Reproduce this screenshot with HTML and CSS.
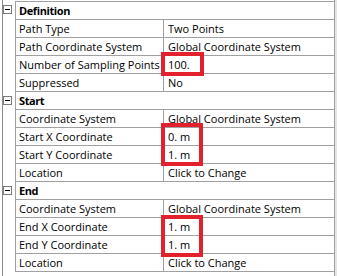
FILE: index.html
```
<!DOCTYPE html>
<html lang="en">
<head>
    <meta charset="UTF-8">
    <title>Path Details</title>
    <link rel="stylesheet" href="styles.css">
</head>
<body>
    <div class="panel">
        <!-- Definition -->
        <div class="row group first">
            <div class="gutter"><span class="toggle"></span></div>
            <div class="cell head">Definition</div>
        </div>
        <div class="row"><div class="gutter"></div><div class="cell name">Path Type</div><div class="cell value">Two Points</div></div>
        <div class="row"><div class="gutter"></div><div class="cell name">Path Coordinate System</div><div class="cell value">Global Coordinate System</div></div>
        <div class="row"><div class="gutter"></div><div class="cell name">Number of Sampling Points</div><div class="cell value">100.</div></div>
        <div class="row"><div class="gutter"></div><div class="cell name">Suppressed</div><div class="cell value">No</div></div>

        <!-- Start -->
        <div class="row group">
            <div class="gutter"><span class="toggle"></span></div>
            <div class="cell head">Start</div>
        </div>
        <div class="row"><div class="gutter"></div><div class="cell name">Coordinate System</div><div class="cell value">Global Coordinate System</div></div>
        <div class="row"><div class="gutter"></div><div class="cell name">Start X Coordinate</div><div class="cell value">0. m</div></div>
        <div class="row"><div class="gutter"></div><div class="cell name">Start Y Coordinate</div><div class="cell value">1. m</div></div>
        <div class="row"><div class="gutter"></div><div class="cell name">Location</div><div class="cell value">Click to Change</div></div>

        <!-- End -->
        <div class="row group">
            <div class="gutter"><span class="toggle"></span></div>
            <div class="cell head">End</div>
        </div>
        <div class="row"><div class="gutter"></div><div class="cell name">Coordinate System</div><div class="cell value">Global Coordinate System</div></div>
        <div class="row"><div class="gutter"></div><div class="cell name">End X Coordinate</div><div class="cell value">1. m</div></div>
        <div class="row"><div class="gutter"></div><div class="cell name">End Y Coordinate</div><div class="cell value">1. m</div></div>
        <div class="row"><div class="gutter"></div><div class="cell name">Location</div><div class="cell value">Click to Change</div></div>

        <!-- highlight boxes drawn over the grid -->
        <div class="mark mark-points"></div>
        <div class="mark mark-start"></div>
        <div class="mark mark-end"></div>
    </div>
</body>
</html>
```

FILE: styles.css
```
body {
    margin: 0;
    background: #ffffff;
    font-family: "Open Sans", "Noto Sans", sans-serif;
    font-size: 11px;
    color: #000000;
}

.panel {
    position: relative;
    margin-left: 2px;
    width: 331px;
    height: 275px;
    padding-top: 1px;
    border-left: 1px solid #8c8c8c;
    border-right: 1px solid #a0a0a0;
    box-shadow: 2px 0 0 #e4e4e4;
}

.row {
    display: grid;
    grid-template-columns: 12px 148px 1fr;
    height: 18px;
}

.row.group {
    grid-template-columns: 12px 1fr;
}

.gutter {
    position: relative;
}

.toggle {
    position: absolute;
    left: 0;
    top: 4px;
    width: 7px;
    height: 7px;
    border: 1px solid #7a7a7a;
    background: #ffffff;
}

.toggle::after {
    content: "";
    position: absolute;
    left: 1px;
    top: 3px;
    width: 5px;
    height: 1px;
    background: #000000;
}

.cell {
    border-left: 1px solid #a0a0a0;
    border-bottom: 1px solid #a0a0a0;
    padding-left: 3px;
    line-height: 17px;
    white-space: nowrap;
    overflow: hidden;
}

.value {
    padding-left: 4px;
}

.head {
    font-weight: bold;
    letter-spacing: -0.4px;
}

.first .cell {
    border-top: 1px solid #a0a0a0;
}

.first {
    height: 19px;
}

.mark {
    position: absolute;
    border: 4px solid #e3212d;
    box-sizing: border-box;
}

.mark-points {
    left: 158px;
    top: 52px;
    width: 43px;
    height: 24px;
}

.mark-start {
    left: 158px;
    top: 123px;
    width: 42px;
    height: 43px;
}

.mark-end {
    left: 158px;
    top: 215px;
    width: 42px;
    height: 42px;
}
```
